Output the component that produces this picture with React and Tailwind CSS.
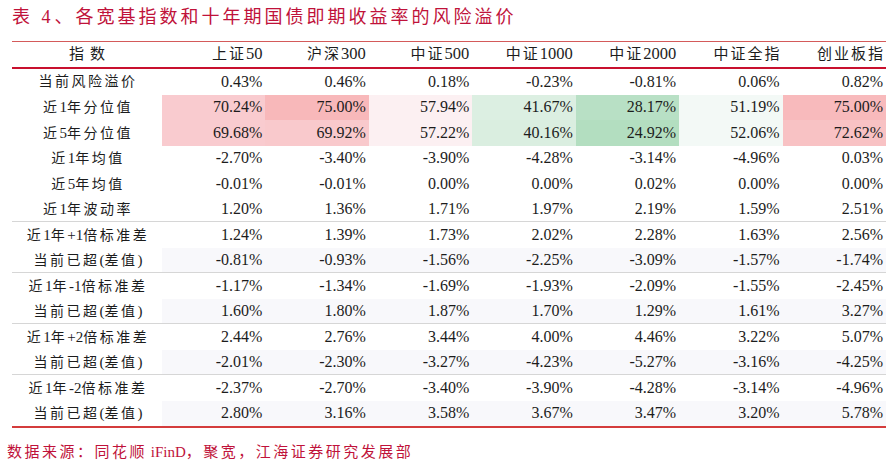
const cols = ["上证50", "沪深300", "中证500", "中证1000", "中证2000", "中证全指", "创业板指"];

const rows = [
  ["当前风险溢价", "0.43%", "0.46%", "0.18%", "-0.23%", "-0.81%", "0.06%", "0.82%"],
  ["近1年分位值", "70.24%", "75.00%", "57.94%", "41.67%", "28.17%", "51.19%", "75.00%"],
  ["近5年分位值", "69.68%", "69.92%", "57.22%", "40.16%", "24.92%", "52.06%", "72.62%"],
  ["近1年均值", "-2.70%", "-3.40%", "-3.90%", "-4.28%", "-3.14%", "-4.96%", "0.03%"],
  ["近5年均值", "-0.01%", "-0.01%", "0.00%", "0.00%", "0.02%", "0.00%", "0.00%"],
  ["近1年波动率", "1.20%", "1.36%", "1.71%", "1.97%", "2.19%", "1.59%", "2.51%"],
  ["近1年+1倍标准差", "1.24%", "1.39%", "1.73%", "2.02%", "2.28%", "1.63%", "2.56%"],
  ["当前已超(差值)", "-0.81%", "-0.93%", "-1.56%", "-2.25%", "-3.09%", "-1.57%", "-1.74%"],
  ["近1年-1倍标准差", "-1.17%", "-1.34%", "-1.69%", "-1.93%", "-2.09%", "-1.55%", "-2.45%"],
  ["当前已超(差值)", "1.60%", "1.80%", "1.87%", "1.70%", "1.29%", "1.61%", "3.27%"],
  ["近1年+2倍标准差", "2.44%", "2.76%", "3.44%", "4.00%", "4.46%", "3.22%", "5.07%"],
  ["当前已超(差值)", "-2.01%", "-2.30%", "-3.27%", "-4.23%", "-5.27%", "-3.16%", "-4.25%"],
  ["近1年-2倍标准差", "-2.37%", "-2.70%", "-3.40%", "-3.90%", "-4.28%", "-3.14%", "-4.96%"],
  ["当前已超(差值)", "2.80%", "3.16%", "3.58%", "3.67%", "3.47%", "3.20%", "5.78%"],
];

// heat colours for the two percentile rows
const heat = {
  1: ["bg-[#f9cbcf]", "bg-[#f8b8ba]", "bg-[#fcf0f2]", "bg-[#dcefe2]", "bg-[#b8e0c5]", "bg-[#f3f9f6]", "bg-[#f8babc]"],
  2: ["bg-[#f9cbcf]", "bg-[#f9c9cc]", "bg-[#fcf0f2]", "bg-[#daeee0]", "bg-[#b3dec0]", "bg-[#f3f9f6]", "bg-[#f8c2c4]"],
};

const divided = [5, 7, 9, 11];
const shaded = [7, 9, 11, 13];

const font = { fontFamily: '"Liberation Serif", "Noto Sans CJK SC", serif' };

const CJK = /[\u3000-\u9fff\uff00-\uffef]/;

// letter-spacing only on the CJK runs, latin/digits stay tight
const Spaced = ({ text, cls, latin = "" }) => {
  const parts = text.match(/[\u3000-\u9fff\uff00-\uffef]+|[^\u3000-\u9fff\uff00-\uffef]+/g) || [];
  return (
    <>
      {parts.map((p, i) =>
        CJK.test(p) ? (
          <span key={i} className={cls}>
            {p}
          </span>
        ) : (
          <span key={i} className={latin}>
            {p}
          </span>
        )
      )}
    </>
  );
};

const App = () => {
  return (
    <div className="w-[892px] h-[466px] bg-white text-[#1c1c1c] overflow-hidden" style={font}>
      <div className="h-[41px] pt-[4px] pl-[12px] text-[18px] leading-[26px] text-[#c0123a]">
        <Spaced text="表 4、各宽基指数和十年期国债即期收益率的风险溢价" cls="tracking-[3px]" latin="px-[4px]" />
      </div>

      <div className="ml-[12px] w-[874px]">
        <div className="grid grid-cols-[150px_repeat(7,minmax(0,1fr))] h-[28px] border-t border-t-[#d45a5a] border-b-2 border-b-[#c8102e] text-[15px] items-center">
          <div className="text-center tracking-[6px] pl-[6px]">指数</div>
          {cols.map((c) => (
            <div key={c} className="text-right pr-[1px]">
              <Spaced text={c} cls="tracking-[2px]" latin="text-[16.5px] pr-[2px]" />
            </div>
          ))}
        </div>

        {rows.map((row, i) => (
          <div
            key={i}
            className={`grid grid-cols-[150px_repeat(7,minmax(0,1fr))] h-[25.5px] ${
              divided.includes(i) ? "border-b border-[#d6d6d6]" : ""
            }`}
          >
            <div className="flex items-center justify-center text-[14px] pl-[2px]">
              <span>
                <Spaced text={row[0]} cls="tracking-[2.5px]" latin="text-[15px]" />
              </span>
            </div>
            {row.slice(1).map((v, j) => (
              <div
                key={j}
                className={`flex items-center justify-end pr-[3px] text-[16px] ${
                  heat[i] ? heat[i][j] : shaded.includes(i) ? "bg-[#f8f8fb]" : ""
                }`}
              >
                {v}
              </div>
            ))}
          </div>
        ))}
        <div className="h-[2px] bg-[#d43c3c]" />
      </div>

      <div className="mt-[12px] pl-[7px] text-[15px] leading-[24px] text-[#c0123a]">
        <Spaced text="数据来源：同花顺 iFinD，聚宽，江海证券研究发展部" cls="tracking-[2.5px]" />
      </div>
    </div>
  );
};

export default App;
